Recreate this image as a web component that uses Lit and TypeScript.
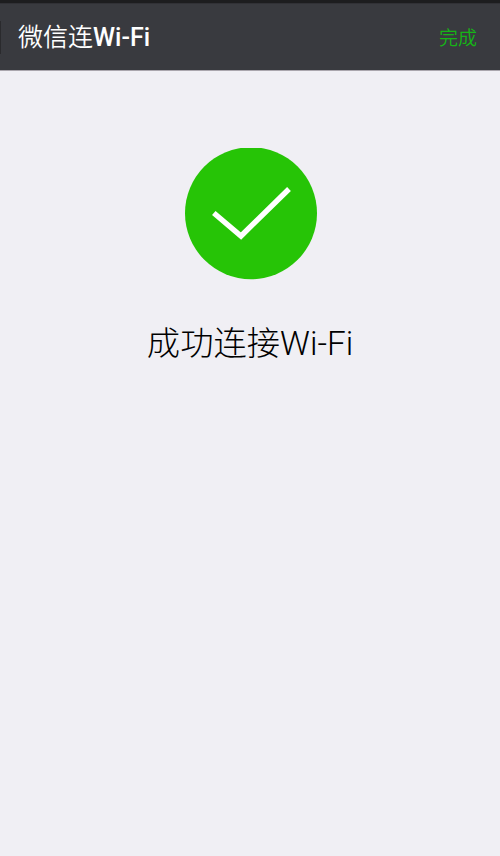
import { LitElement, html, css } from "lit";
import { customElement } from "lit/decorators.js";

@customElement("app-root")
export class AppRoot extends LitElement {
  static styles = css`
    :host { display: flex; flex-direction: column; height: 856px; background: #f0eff4; font-family: Roboto, "Noto Sans CJK SC", sans-serif; overflow: hidden; }
    .status { height: 3px; background: #1d1d1f; border-bottom: 1px solid #313136; flex: none; }
    .bar { height: 67px; flex: none; background: #393a3f; border-bottom: 1px solid #aaa6ad; display: flex; align-items: center; box-sizing: border-box; padding-right: 23px; }
    .edge { width: 1px; height: 33px; margin-right: 17px; background: #2a2a2d; }
    .title { margin: 2px auto 0 0; color: #fff; font-size: 25px; line-height: 36px; font-weight: 350; }
    .title b { font-weight: 500; }
    .done { border: 0; padding: 0; background: none; color: #16b516; font: 350 19px/28px "Noto Sans CJK SC", sans-serif; }
    main { display: flex; flex-direction: column; align-items: center; padding-top: 77px; }
    svg { display: block; width: 132px; height: 132px; margin-left: 2px; }
    .message { margin: 40px 0 0; font: 300 33.3px/48px Roboto, "Noto Sans CJK SC", sans-serif; color: #000; white-space: nowrap; }
  `;

  render() {
    return html`
      <div class="status"></div>
      <header class="bar">
        <span class="edge"></span>
        <h1 class="title">微信连<b>Wi-Fi</b></h1>
        <button class="done">完成</button>
      </header>
      <main>
        <svg viewBox="185 148 132 132"><circle cx="251" cy="213.2" r="66" fill="#26c406" /><path d="M213.8 213L241 236L289 189" fill="none" stroke="#fff" stroke-width="5.4" /></svg>
        <p class="message">成功连接Wi-Fi</p>
      </main>
    `;
  }
}
